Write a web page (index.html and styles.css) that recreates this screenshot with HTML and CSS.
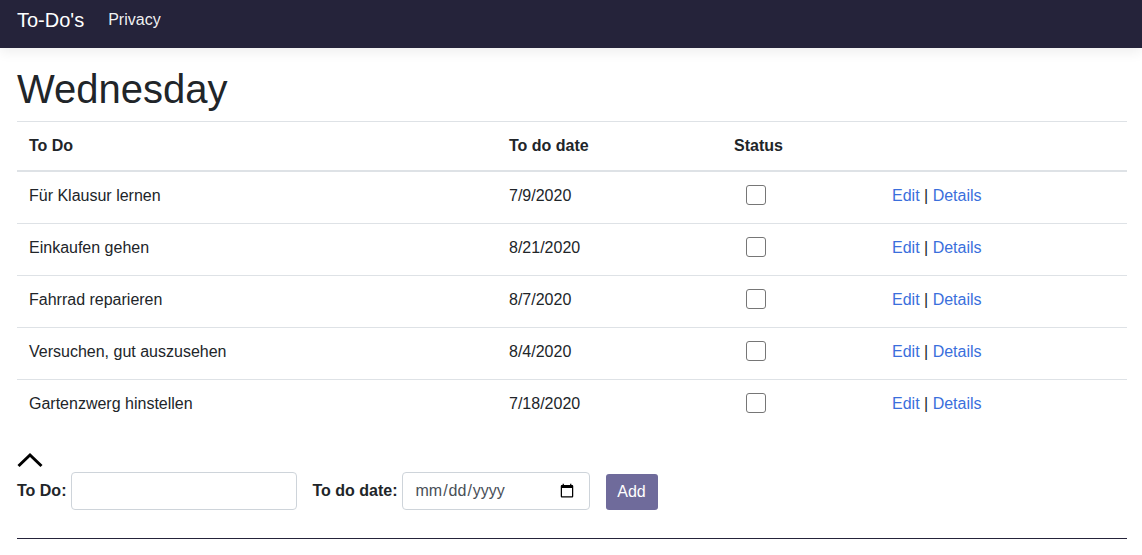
FILE: index.html
```html
<!DOCTYPE html>
<html lang="de">
<head>
<meta charset="utf-8">
<title>To-Do's</title>
<link rel="stylesheet" href="styles.css">
</head>
<body>
<header class="navbar">
  <a class="brand" href="#">To-Do's</a>
  <a class="nav-link" href="#">Privacy</a>
</header>
<main class="container">
  <h1 class="day">Wednesday</h1>
  <table class="todo-table">
    <colgroup>
      <col class="c1"><col class="c2"><col class="c3"><col class="c4">
    </colgroup>
    <thead>
      <tr><th>To Do</th><th>To do date</th><th>Status</th><th></th></tr>
    </thead>
    <tbody>
      <tr><td>Für Klausur lernen</td><td>7/9/2020</td><td><input class="check" type="checkbox"></td><td><a href="#">Edit</a> | <a href="#">Details</a></td></tr>
      <tr><td>Einkaufen gehen</td><td>8/21/2020</td><td><input class="check" type="checkbox"></td><td><a href="#">Edit</a> | <a href="#">Details</a></td></tr>
      <tr><td>Fahrrad reparieren</td><td>8/7/2020</td><td><input class="check" type="checkbox"></td><td><a href="#">Edit</a> | <a href="#">Details</a></td></tr>
      <tr><td>Versuchen, gut auszusehen</td><td>8/4/2020</td><td><input class="check" type="checkbox"></td><td><a href="#">Edit</a> | <a href="#">Details</a></td></tr>
      <tr><td>Gartenzwerg hinstellen</td><td>7/18/2020</td><td><input class="check" type="checkbox"></td><td><a href="#">Edit</a> | <a href="#">Details</a></td></tr>
    </tbody>
  </table>
  <div class="toggle">
    <svg width="26" height="16" viewBox="0 0 26 16"><polyline points="1.5,14 13,3 24.5,14" fill="none" stroke="#000" stroke-width="3"/></svg>
  </div>
  <form class="add-form">
    <label class="lbl" for="todo">To Do:</label>
    <input class="field text-field" id="todo" type="text">
    <label class="lbl lbl-date" for="date">To do date:</label>
    <input class="field date-field" id="date" type="date">
    <button class="btn-add" type="button">Add</button>
  </form>
  <hr class="rule">
</main>
</body>
</html>
```
FILE: styles.css
```css
* { box-sizing: border-box; }
body {
  margin: 0;
  font-family: "Liberation Sans", Arial, sans-serif;
  font-size: 16px;
  line-height: 24px;
  color: #212529;
  background: #fff;
}
a { color: #3a6fdc; text-decoration: none; }
.navbar {
  height: 48px;
  background: #25233a;
  display: flex;
  align-items: center;
  padding: 0 17px;
  box-shadow: 0 4px 12px rgba(0,0,0,0.07);
}
.brand {
  color: #fff;
  font-size: 20px;
  line-height: 30px;
  margin-top: -9px;
  margin-right: 24px;
}
.nav-link {
  color: rgba(255,255,255,0.95);
  font-size: 16px;
  margin-top: -9px;
}
.container {
  padding: 0 15px 0 17px;
}
.day {
  margin: 17px 0 8px;
  font-size: 40px;
  font-weight: 400;
  line-height: 48px;
}
.todo-table {
  width: 1110px;
  border-collapse: collapse;
}
.c1 { width: 480px; }
.c2 { width: 225px; }
.c3 { width: 158px; }
.c4 { width: 247px; }
.todo-table th {
  text-align: left;
  font-weight: 700;
  padding: 12px;
  border-top: 1px solid #dee2e6;
  border-bottom: 2px solid #dee2e6;
  vertical-align: bottom;
  height: 49px;
}
.todo-table td {
  padding: 12px;
  height: 52px;
  vertical-align: top;
  border-top: 1px solid #dee2e6;
}
.todo-table tbody tr:first-child td { border-top: none; }
.check {
  appearance: none;
  -webkit-appearance: none;
  width: 20px;
  height: 20px;
  margin: 1px 0 0 12px;
  border: 1px solid #767676;
  border-radius: 3px;
  background: #fff;
  display: block;
}
.toggle {
  margin-top: 19px;
  height: 18px;
  display: flex;
  align-items: flex-end;
}
.add-form {
  display: flex;
  align-items: center;
  margin-top: 4px;
}
.lbl { font-weight: 700; margin-right: 5px; }
.lbl-date { margin-left: 15px; margin-right: 4px; }
.field {
  height: 38px;
  border: 1px solid #ced4da;
  border-radius: 4px;
  padding: 6px 12px;
  font-family: "Liberation Sans", Arial, sans-serif;
  font-size: 16px;
  color: #495057;
  background: #fff;
}
.text-field { width: 226px; }
.date-field { width: 188px; }
.btn-add {
  margin-left: 16px;
  height: 36px;
  width: 52px;
  margin-top: 2px;
  background: #6f6b9b;
  color: #fff;
  border: none;
  border-radius: 3px;
  font-family: "Liberation Sans", Arial, sans-serif;
  font-size: 16px;
  padding: 0;
}
.rule {
  margin: 28px 0 0;
  width: 1110px;
  border: none;
  border-top: 1px solid #25233a;
}
```
